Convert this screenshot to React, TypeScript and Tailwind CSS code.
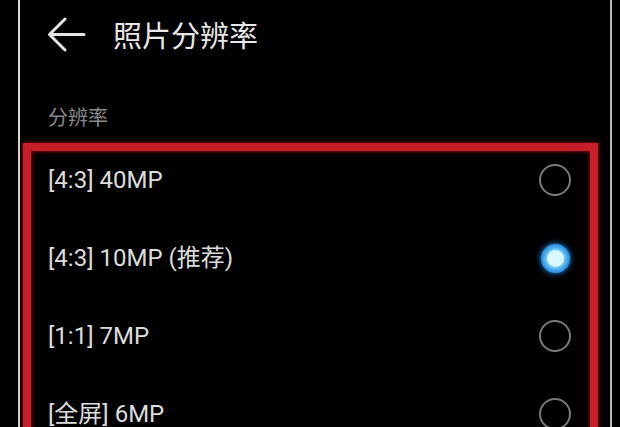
import React from 'react';

type Option = { label: string; selected?: boolean };

const options: Option[] = [
  { label: '[4:3] 40MP' },
  { label: '[4:3] 10MP (推荐)', selected: true },
  { label: '[1:1] 7MP' },
  { label: '[全屏] 6MP' },
];

function Radio({ on }: { on?: boolean }) {
  if (on) {
    return (
      <div className="w-[34px] h-[34px] flex items-center justify-center">
        <div className="w-[29px] h-[29px] rounded-full bg-[#1f86e0] shadow-[0_0_6px_#1a7fd8] flex items-center justify-center">
          <div className="w-[17px] h-[17px] rounded-full bg-[#d9f7ff] shadow-[0_0_5px_3px_#7fd6f7]" />
        </div>
      </div>
    );
  }
  return (
    <div className="w-[34px] h-[34px] flex items-center justify-center">
      <div className="w-[32px] h-[32px] rounded-full border-2 border-[#7a7a7a]" />
    </div>
  );
}

export default function App() {
  return (
    <div
      className="w-[620px] h-[427px] bg-black overflow-hidden flex"
      style={{ fontFamily: 'Roboto, "Noto Sans CJK SC", sans-serif' }}
    >
      <div className="w-[18px] shrink-0" />
      <div className="w-[2px] shrink-0 bg-[#d6d6d6]" />

      <div className="w-[590px] shrink-0 flex flex-col">
        {/* header */}
        <div className="h-[74px] shrink-0 flex items-center">
          <svg width="40" height="38" viewBox="0 0 40 38" className="ml-[27px] -mt-[2px]">
            <path
              d="M37 17.5H3M18 2 2.5 17.5 18 33"
              fill="none"
              stroke="#e4e4e4"
              strokeWidth="3"
              strokeLinecap="round"
              strokeLinejoin="round"
            />
          </svg>
          <span className="ml-[26px] text-[29px] leading-none text-[#e8e8e8]">照片分辨率</span>
        </div>

        <div className="mt-[34px] shrink-0 pl-[28px] text-[20px] leading-[20px] text-[#8a8a8a]">分辨率</div>

        {/* options box */}
        <div className="mt-[15px] shrink-0 ml-[3px] mr-[12px] border-[8px] border-b-0 border-[#c81e2a] shadow-[0_0_4px_#b0101c,inset_0_0_4px_#b0101c] pt-[12px] pl-[17px] pr-[18px] flex flex-col gap-[44px] h-[320px]">
          {options.map(o => (
            <div key={o.label} className="h-[34px] shrink-0 flex items-center justify-between">
              <span className="text-[24px] leading-none text-[#dcdcdc]">{o.label}</span>
              <Radio on={o.selected} />
            </div>
          ))}
        </div>
      </div>

      <div className="w-[2px] shrink-0 bg-[#bdbdbd]" />
      <div className="flex-1" />
    </div>
  );
}
